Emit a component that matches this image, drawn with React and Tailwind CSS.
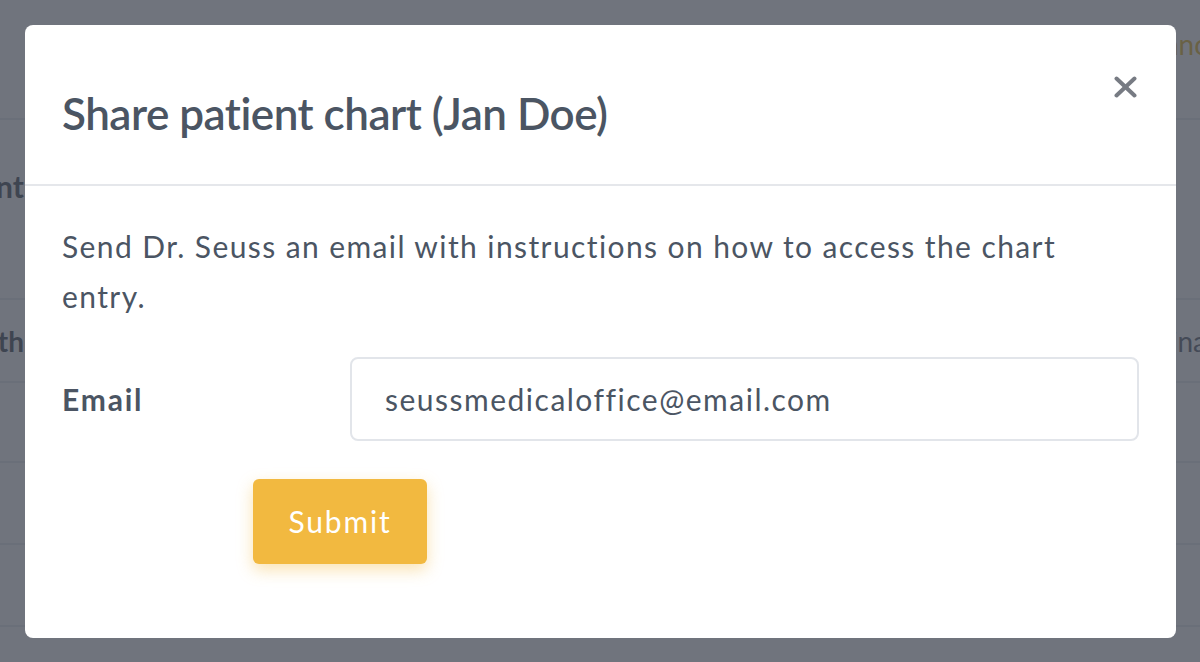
import React from "react";

// Pagina de fondo, casi toda tapada por el modal
function BackgroundPage() {
  const rows = [
    { left: "Health", right: "Final", h: "h-[83px]" },
    { left: "", right: "", h: "h-[80px]" },
    { left: "", right: "", h: "h-[82px]" },
    { left: "", right: "", h: "h-[82px]" },
  ];

  return (
    <div className="h-[662px] bg-white overflow-hidden">
      {/* Barra superior */}
      <div className="h-[120px] border-b-2 border-[#e5e7eb] flex items-start pt-[18px]">
        <div className="ml-[862px] text-[28px] leading-[40px] text-[#1f2937] whitespace-nowrap">
          staff login
        </div>
        <div className="ml-auto w-[56px] flex justify-start whitespace-nowrap text-[28px] leading-[40px] text-[#e0a800] pt-[6px]">
          Announcements
        </div>
      </div>

      {/* Titulo de seccion */}
      <div className="h-[180px] border-b-2 border-[#e5e7eb] pt-[48px]">
        <div className="w-[24px] flex justify-end whitespace-nowrap text-[30px] leading-[36px] font-bold text-[#1f2937]">
          Patient
        </div>
      </div>

      {/* Filas */}
      {rows.map((row, i) => (
        <div key={i} className={`${row.h} border-b-2 border-[#e5e7eb] flex items-center justify-between`}>
          <div className="w-[24px] flex justify-end whitespace-nowrap text-[28px] font-bold text-[#1f2937]">
            {row.left}
          </div>
          <div className="w-[45px] flex justify-start whitespace-nowrap text-[28px] text-[#374151]">
            {row.right}
          </div>
        </div>
      ))}
    </div>
  );
}

function CloseIcon() {
  return (
    <svg viewBox="0 0 23 22" className="w-[23px] h-[22px]" fill="none" stroke="currentColor" strokeWidth="4" strokeLinecap="round">
      <line x1="2.5" y1="2.5" x2="20.5" y2="19.5" />
      <line x1="20.5" y1="2.5" x2="2.5" y2="19.5" />
    </svg>
  );
}

function ShareModal() {
  return (
    <div className="relative w-[1151px] bg-white rounded-lg">
      {/* Encabezado */}
      <div className="border-b-2 border-[#e5e7eb] px-[37px] pt-[62px] pb-[45px]">
        <h2 className="text-[44px] leading-[52px] font-semibold tracking-[-0.5px] text-[#4b5563]">
          Share patient chart (Jan Doe)
        </h2>
      </div>
      <button className="absolute right-[39px] top-[51px] text-[#777b83]">
        <CloseIcon />
      </button>

      {/* Contenido */}
      <div className="px-[37px] pt-[35px] pb-[74px]">
        <p className="max-w-[1060px] text-[30px] leading-[50px] tracking-[1.4px] text-[#4b5563]">
          Send Dr. Seuss an email with instructions on how to access the chart entry.
        </p>

        <div className="mt-[36px] grid grid-cols-[288px_1fr] items-center">
          <label className="text-[30px] font-bold tracking-[1.8px] text-[#4b5563]">Email</label>
          <input
            type="email"
            readOnly
            value="seussmedicaloffice@email.com"
            className="h-[84px] w-full border-2 border-[#e2e5ea] rounded-lg px-[33px] text-[30px] tracking-[1.5px] text-[#4b5563] bg-white outline-none"
          />
        </div>

        <button className="mt-[38px] ml-[191px] w-[174px] h-[85px] rounded-md bg-[#f2b940] text-white text-[30px] tracking-[1.8px] shadow-[0_6px_16px_rgba(242,185,64,0.4)]">
          Submit
        </button>
      </div>
    </div>
  );
}

export default function App() {
  return (
    <div className="relative h-[662px] overflow-hidden font-[Lato,sans-serif]">
      <BackgroundPage />
      <div className="fixed inset-0 bg-[rgba(72,77,88,0.78)] pt-[25px] pl-[25px]">
        <ShareModal />
      </div>
    </div>
  );
}
